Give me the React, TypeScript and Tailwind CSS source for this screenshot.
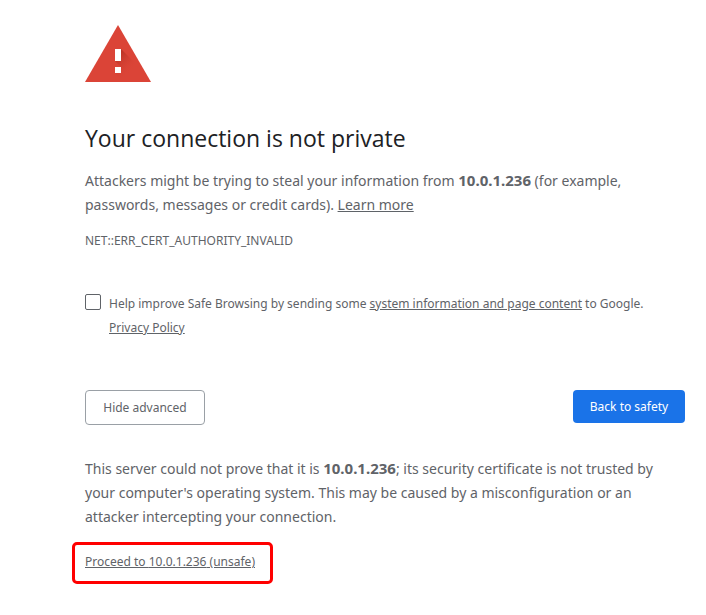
import type { ReactElement } from "react";

const HOST = "10.0.1.236";

/** Show and return the red warning triangle. */
function renderWarningIcon(): ReactElement {
  return (
    <svg className="h-[57px] w-[66px]" viewBox="0 0 66 57" aria-hidden="true">
      <defs>
        <linearGradient id="shade" gradientUnits="userSpaceOnUse" x1="32" y1="30" x2="47" y2="45">
          <stop offset="0" stopColor="#b02e20" stopOpacity="0.8" />
          <stop offset="1" stopColor="#db4437" stopOpacity="0" />
        </linearGradient>
      </defs>
      <path d="M33 0 66 57H0Z" fill="#db4437" />
      <path d="M36 24 56 44V57H39L30 48 36 42 30 36Z" fill="url(#shade)" />
      <path d="M30 24h6v12h-6zM30 42h6v6h-6z" fill="#fff" />
    </svg>
  );
}

/** Show and return the host name in bold. */
function renderHost(): ReactElement {
  return <strong className="text-[15px] leading-none">{HOST}</strong>;
}

/** Show and return the Safe Browsing opt-in row. */
function renderOptIn(): ReactElement {
  return (
    <div className="mt-[39px] flex gap-2 text-[12px] leading-6">
      <input
        id="opt-in"
        type="checkbox"
        className="mt-[2px] size-4 shrink-0 appearance-none rounded-[2px] border border-[#5f6368] bg-white checked:bg-[#1a73e8]"
      />
      <div>
        <label htmlFor="opt-in">Help improve Safe Browsing by sending some </label>
        <a href="#info" className="underline">
          system information and page content
        </a>{" "}
        to Google.
        <br />
        <a href="#privacy" className="underline">
          Privacy Policy
        </a>
      </div>
    </div>
  );
}

export default function App() {
  return (
    <main className="bg-white pt-[25px] pr-[21px] pb-8 pl-[85px] font-['Noto_Sans',sans-serif] text-[14px] leading-6 text-[#5f6368]">
      {renderWarningIcon()}
      <h1 className="mt-10 font-['Open_Sans',sans-serif] text-[23px] leading-8 text-[#202124]">
        Your connection is not private
      </h1>
      <p className="mt-[15px]">
        Attackers might be trying to steal your information from {renderHost()} (for example, passwords, messages or
        credit cards).{" "}
        <a href="#learn" className="underline">
          Learn more
        </a>
      </p>
      <p className="mt-3 text-[12px]">NET::ERR_CERT_AUTHORITY_INVALID</p>
      {renderOptIn()}
      <div className="mt-[50px] flex items-start justify-between text-[12px]">
        <button type="button" className="h-[35px] w-[120px] rounded border border-[#9aa0a6] bg-white pt-px">
          Hide advanced
        </button>
        <button type="button" className="h-[33px] w-[112px] rounded bg-[#1a73e8] pt-px text-white">
          Back to safety
        </button>
      </div>
      <p className="mt-8 pr-3">
        This server could not prove that it is {renderHost()}; its security certificate is not trusted by your
        computer's operating system. This may be caused by a misconfiguration or an attacker intercepting your
        connection.
      </p>
      <a
        href="#proceed"
        className="mt-[13px] -ml-[13px] inline-block rounded-[5px] border-[3px] border-[#f00] pt-[5px] pr-[15px] pb-[7px] pl-[10px] text-[12px] underline"
      >
        Proceed to {HOST} (unsafe)
      </a>
    </main>
  );
}
